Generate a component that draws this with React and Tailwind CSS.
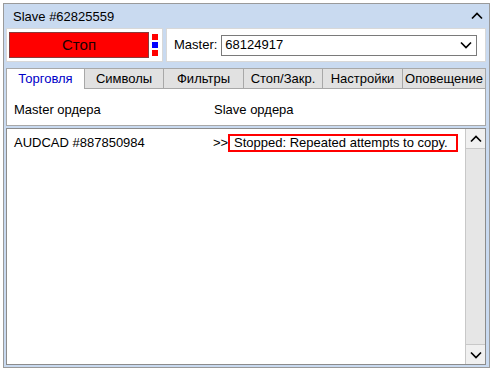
import React from "react";

const Up = ({ className = "" }) => (
  <svg width="12" height="8" viewBox="0 0 12 8" className={className}>
    <path d="M1 6.5 L6 1.5 L11 6.5" fill="none" stroke="#000" strokeWidth="1.7" />
  </svg>
);
const Down = ({ className = "" }) => (
  <svg width="12" height="8" viewBox="0 0 12 8" className={className}>
    <path d="M1 1.5 L6 6.5 L11 1.5" fill="none" stroke="#000" strokeWidth="1.7" />
  </svg>
);

export default function App() {
  const tabs = [
    ["Торговля", "w-[78px]"],
    ["Символы", "w-[79px]"],
    ["Фильтры", "w-[80px]"],
    ["Стоп/Закр.", "w-[79px]"],
    ["Настройки", "w-[80px]"],
    ["Оповещение", "flex-1"],
  ];
  return (
    <div
      className="w-[495px] h-[372px] bg-white pt-[3px] pl-[3px] text-[13px] text-black"
      style={{ fontFamily: '"Liberation Sans", Arial, sans-serif' }}
    >
      <div className="w-[487px] h-[365px] border border-[#9a9a9a] bg-[#c9daf0] pl-[2px] pr-[3px] flex flex-col">
        <div className="h-[24px] flex items-center justify-between pl-[7px] pr-[3px]">
          <span className="leading-none">Slave #62825559</span>
          <Up />
        </div>
        <div className="h-[34px] flex gap-[3px]">
          <div className="w-[157px] bg-white border border-[#d8d8d8] flex items-center pl-[2px] gap-[3px]">
            <div className="w-[140px] h-[26px] bg-[#ff0000] border border-[#8a3a3a] flex items-center justify-center text-[15px] text-[#1a0000]">
              Стоп
            </div>
            <div className="flex flex-col gap-[2px]">
              <div className="w-[6px] h-[6px] bg-[#ff0000]" />
              <div className="w-[6px] h-[6px] bg-[#0000ff]" />
              <div className="w-[6px] h-[6px] bg-[#ff0000]" />
            </div>
          </div>
          <div className="flex-1 bg-white border border-[#d8d8d8] flex items-center pl-[7px] pr-[8px] gap-[4px]">
            <span>Master:</span>
            <div className="flex-1 h-[21px] border border-[#7a7a7a] flex items-center justify-between pl-[3px] pr-[4px]">
              <span>68124917</span>
              <Down />
            </div>
          </div>
        </div>
        <div className="mt-[6px] h-[21px] flex">
          {tabs.map(([t, w], i) => (
            <div
              key={t}
              className={`${w} flex items-center justify-center border-t border-[#a8a8a8] ${
                i === 0
                  ? "bg-white text-[#0000c8] border-l"
                  : "bg-[#e1e1e1] border-l border-b"
              } ${i === tabs.length - 1 ? "border-r" : ""}`}
            >
              {t}
            </div>
          ))}
        </div>
        <div className="h-[37px] bg-white border-l border-r border-b border-[#a8a8a8] flex items-end pb-[6px]">
          <span className="pl-[7px] w-[207px]">Master ордера</span>
          <span>Slave ордера</span>
        </div>
        <div className="mt-[2px] flex-1 mb-[2px] bg-white border border-[#8c8c8c] flex">
          <div className="flex-1 pt-[5px]">
            <div className="flex items-center h-[18px]">
              <span className="pl-[7px] w-[206px]">AUDCAD #887850984</span>
              <span className="w-[15px]">&gt;&gt;</span>
              <span className="h-[18px] w-[230px] border-2 border-[#ff0000] flex items-center pl-[4px]">
                Stopped: Repeated attempts to copy.
              </span>
            </div>
          </div>
          <div className="w-[20px] bg-[#e6e6e6] border-l border-[#c8c8c8] flex flex-col justify-between">
            <div className="h-[20px] bg-[#f0f0f0] border-b border-[#c8c8c8] flex items-center justify-center">
              <Up />
            </div>
            <div className="h-[20px] bg-[#f0f0f0] border-t border-[#c8c8c8] flex items-center justify-center">
              <Down />
            </div>
          </div>
        </div>
      </div>
    </div>
  );
}
